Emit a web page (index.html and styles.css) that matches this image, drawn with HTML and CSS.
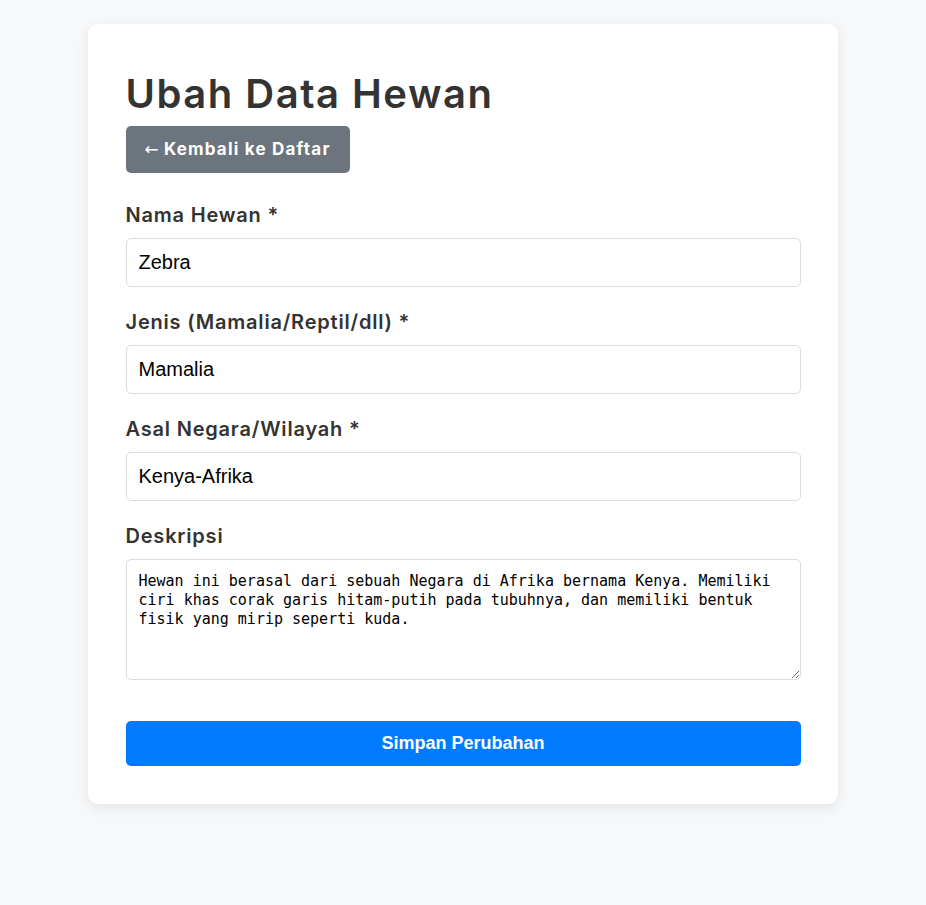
FILE: index.html
```html
<!DOCTYPE html>
<html lang="id">
<head>
<meta charset="utf-8">
<title>Ubah Data Hewan</title>
<link rel="stylesheet" href="styles.css">
</head>
<body>
<div class="card">
  <h1 class="title">Ubah Data Hewan</h1>
  <a class="btn-back" href="#"><span class="arrow">←</span> Kembali ke Daftar</a>
  <form class="form">
    <div class="field">
      <label class="label" for="nama">Nama Hewan *</label>
      <input class="input" id="nama" type="text" value="Zebra">
    </div>
    <div class="field">
      <label class="label" for="jenis">Jenis (Mamalia/Reptil/dll) *</label>
      <input class="input" id="jenis" type="text" value="Mamalia">
    </div>
    <div class="field">
      <label class="label" for="asal">Asal Negara/Wilayah *</label>
      <input class="input" id="asal" type="text" value="Kenya-Afrika">
    </div>
    <div class="field">
      <label class="label" for="desk">Deskripsi</label>
      <textarea class="textarea" id="desk">Hewan ini berasal dari sebuah Negara di Afrika bernama Kenya. Memiliki ciri khas corak garis hitam-putih pada tubuhnya, dan memiliki bentuk fisik yang mirip seperti kuda.</textarea>
    </div>
    <button class="btn-save" type="button">Simpan Perubahan</button>
  </form>
</div>
</body>
</html>
```

FILE: styles.css
```css
* { box-sizing: border-box; }

body {
  margin: 0;
  padding: 24px 0;
  background: #f7f8fa;
  font-family: Inter, "Noto Sans", sans-serif;
  color: #333;
}

.card {
  width: 750px;
  margin: 0 auto;
  padding: 37.5px 37.5px 38.5px;
  background: #fff;
  border-radius: 10px;
  box-shadow: 0 4px 14px rgba(0, 0, 0, 0.08);
}

.title {
  margin: 8px 0 8px;
  font-size: 40px;
  line-height: 48px;
  font-weight: 600;
  color: #333;
  letter-spacing: 1.5px;
}

.btn-back {
  display: inline-block;
  padding: 12px 19px;
  background: #6c757d;
  color: #fff;
  border-radius: 5px;
  text-decoration: none;
  font-size: 17px;
  line-height: 23px;
  font-weight: 700;
  letter-spacing: 1.2px;
}

.arrow {
  font-family: "DejaVu Sans", sans-serif;
  font-weight: 400;
  letter-spacing: 0;
}

.form {
  display: flex;
  flex-direction: column;
  margin-top: 29px;
}

.field {
  display: flex;
  flex-direction: column;
  margin-bottom: 22px;
}

.label {
  display: block;
  font-size: 20px;
  line-height: 27px;
  font-weight: 600;
  color: #333;
  margin-bottom: 9px;
  letter-spacing: 0.8px;
}

.input {
  display: block;
  width: 100%;
  height: 49px;
  padding: 12px;
  border: 1px solid #dcdcdc;
  border-radius: 5px;
  font-family: "Liberation Sans", Arial, sans-serif;
  font-size: 20px;
  color: #000;
  background: #fff;
}

.textarea {
  display: block;
  width: 100%;
  height: 121px;
  padding: 12px;
  border: 1px solid #dcdcdc;
  border-radius: 5px;
  font-family: "DejaVu Sans Mono", monospace;
  font-size: 15px;
  line-height: 19px;
  color: #000;
  background: #fff;
  resize: vertical;
}

.btn-save {
  margin-top: 19px;
  width: 100%;
  height: 45px;
  border: 0;
  border-radius: 5px;
  background: #007bff;
  color: #fff;
  font-family: "Liberation Sans", Arial, sans-serif;
  font-size: 18px;
  font-weight: 700;
}
```
